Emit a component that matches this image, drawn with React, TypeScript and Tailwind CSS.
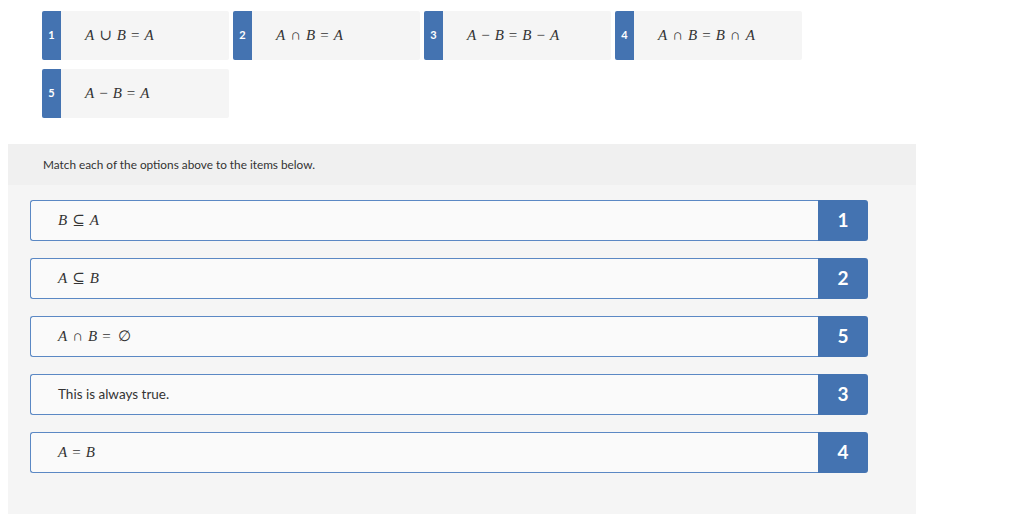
import React from 'react';

const mathFont = { fontFamily: '"Liberation Serif", "DejaVu Serif", serif' };

const options = [
    { n: 1, expr: 'A ∪ B = A' },
    { n: 2, expr: 'A ∩ B = A' },
    { n: 3, expr: 'A − B = B − A' },
    { n: 4, expr: 'A ∩ B = B ∩ A' },
    { n: 5, expr: 'A − B = A' },
];

const items = [
    { text: 'B ⊆ A', math: true, answer: 1 },
    { text: 'A ⊆ B', math: true, answer: 2 },
    { text: 'A ∩ B = ∅', math: true, answer: 5 },
    { text: 'This is always true.', math: false, answer: 3 },
    { text: 'A = B', math: true, answer: 4 },
];

// italic letters, upright operators with some room around them
const MathText = ({ s }: { s: string }) => (
    <span style={mathFont} className="inline-flex items-baseline text-[15px] text-[#333]">
        {s.split(' ').map((tok, i) =>
            /^[A-Z]$/.test(tok) ? (
                <span key={i} className="italic">
                    {tok}
                </span>
            ) : tok === '∅' ? (
                <span key={i} className="ml-[2px]">
                    {tok}
                </span>
            ) : (
                <span key={i} className="mx-[5px]">
                    {tok}
                </span>
            )
        )}
    </span>
);

const OptionCard = ({ n, expr }: { n: number; expr: string }) => (
    <div className="flex h-[49px] w-[187px] overflow-hidden rounded-[2px] bg-[#f5f5f5]">
        <div className="flex w-[19px] shrink-0 items-center justify-center bg-[#4473b1] text-[11px] font-bold text-white">
            {n}
        </div>
        <div className="flex items-center pl-[24px]">
            <MathText s={expr} />
        </div>
    </div>
);

export default function App() {
    return (
        <div className="h-[520px] w-[1024px] bg-white" style={{ fontFamily: 'Lato, "Liberation Sans", sans-serif' }}>
            {/* options */}
            <div className="flex w-[820px] flex-wrap gap-x-[4px] gap-y-[9px] pl-[42px] pt-[11px]">
                {options.map((o) => (
                    <OptionCard key={o.n} n={o.n} expr={o.expr} />
                ))}
            </div>

            {/* matching panel */}
            <div className="ml-[8px] mt-[26px] h-[370px] w-[908px] bg-[#f5f5f5]">
                <div className="flex h-[41px] items-center bg-[#f0f0f0] pl-[35px] text-[11.8px] text-[#333]">
                    Match each of the options above to the items below.
                </div>
                <div className="flex flex-col gap-[17px] pl-[22px] pt-[15px]">
                    {items.map((it, i) => (
                        <div key={i} className="flex h-[41px] w-[838px]">
                            <div className="flex flex-1 items-center rounded-l-[3px] border border-r-0 border-[#5b88c4] bg-[#fafafa] pl-[27px]">
                                {it.math ? (
                                    <MathText s={it.text} />
                                ) : (
                                    <span className="text-[13.5px] text-[#333]">{it.text}</span>
                                )}
                            </div>
                            <div className="flex w-[50px] items-center justify-center rounded-r-[3px] bg-[#4473b1] text-[19px] font-bold text-white">
                                {it.answer}
                            </div>
                        </div>
                    ))}
                </div>
            </div>
        </div>
    );
}
